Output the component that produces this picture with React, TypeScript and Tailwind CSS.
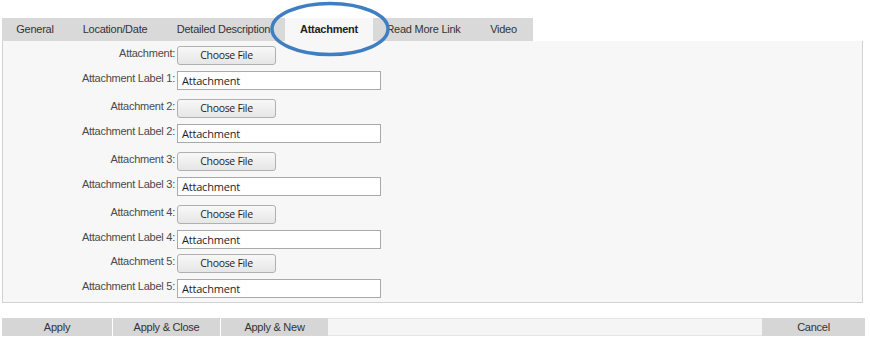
import React from "react";

const tabs = [
  { label: "General", w: "w-[66px]" },
  { label: "Location/Date", w: "w-[94px]" },
  { label: "Detailed Description", w: "w-[123px]" },
  { label: "Attachment", w: "w-[88px]", active: true },
  { label: "Read More Link", w: "w-[101px]" },
  { label: "Video", w: "w-[59px]" },
];

const rows = [1, 2, 3, 4, 5];

const FileRow = ({ label, last }: { label: string; last?: boolean }) => (
  <div className={`flex ${last ? "mt-[5px]" : ""}`}>
    <div className="w-[174px] pr-[2px] pt-[1px] text-right leading-[13px]">{label}</div>
    <button className="h-[19px] w-[99px] rounded-[3px] border border-[#b0b0b0] bg-gradient-to-b from-[#f8f8f8] to-[#e6e6e6] font-['Open_Sans'] text-[10.5px] leading-[17px] tracking-[-0.3px] text-[#1e1e1e]">
      Choose File
    </button>
  </div>
);

const LabelRow = ({ n }: { n: number }) => (
  <div className="mt-[6px] flex">
    <div className="w-[174px] pr-[2px] pt-[1px] text-right leading-[13px]">Attachment Label {n}:</div>
    <div className="h-[19px] w-[204px] border border-[#a9a9a9] bg-white pl-[4px] pt-[1px] font-['Open_Sans'] text-[11px] leading-[16px] tracking-[-0.2px] text-[#1e1e1e]">
      Attachment
    </div>
  </div>
);

export default function App() {
  return (
    <div className="relative h-[345px] w-[870px] bg-white font-['Liberation_Sans',Arial,sans-serif] text-[11px] tracking-[-0.25px] text-[#4a4a4a]">
      <div className="pl-[2px] pr-[7px] pt-[18px]">
        <div className="flex h-[23px] w-[531px] bg-[#d9d9d9] text-[#333]">
          {tabs.map((t) => (
            <div
              key={t.label}
              className={`${t.w} flex items-center justify-center ${t.active ? "bg-[#f7f7f7] font-bold text-[#222]" : ""}`}
            >
              {t.label}
            </div>
          ))}
        </div>
        <div className="h-[262px] w-[861px] border border-t-0 border-[#d2d2d2] bg-[#f7f7f7] pt-[5px]">
          {rows.map((n, i) => (
            <div key={n} className={i > 0 && i < 4 ? "mt-[9px]" : ""}>
              <FileRow label={n === 1 ? "Attachment:" : `Attachment ${n}:`} last={n === 5} />
              <LabelRow n={n} />
            </div>
          ))}
        </div>
        <div className="mt-[15px] flex h-[18px] w-[863px] items-center text-[#333]">
          <div className="flex h-full w-[110px] items-center justify-center bg-[#d6d6d6]">Apply</div>
          <div className="flex h-full w-[108px] items-center justify-center border-l border-white bg-[#d6d6d6]">Apply &amp; Close</div>
          <div className="flex h-full w-[108px] items-center justify-center border-l border-white bg-[#d6d6d6]">Apply &amp; New</div>
          <div className="h-full flex-1 border-y border-[#e6e6e6] bg-[#f5f5f5]" />
          <div className="flex h-full w-[103px] items-center justify-center bg-[#d6d6d6]">Cancel</div>
        </div>
      </div>
      <svg className="absolute left-[268px] top-0" width="124" height="60" viewBox="0 0 124 60">
        <ellipse cx="62" cy="29" rx="58" ry="25.5" fill="none" stroke="#3f7fc1" strokeWidth="3.5" />
      </svg>
    </div>
  );
}
